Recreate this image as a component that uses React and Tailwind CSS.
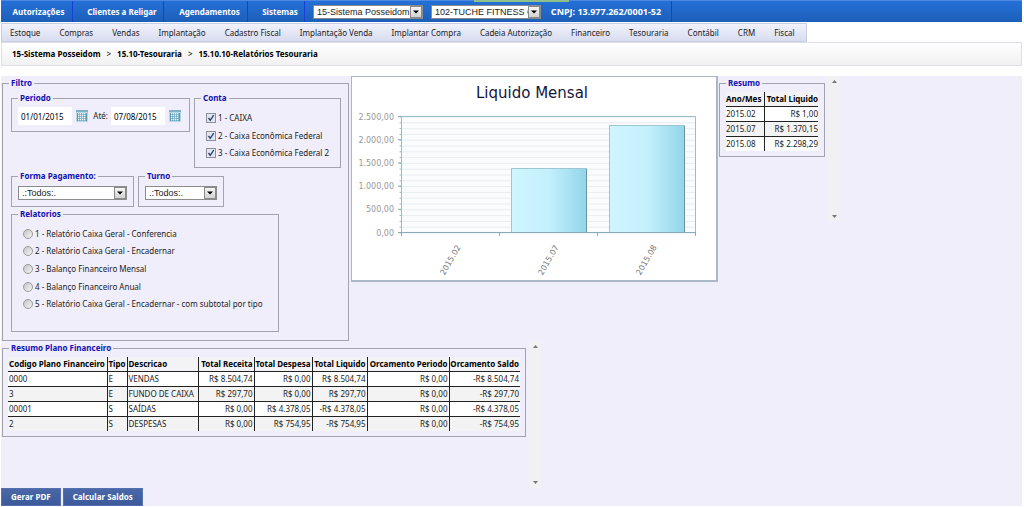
import React from 'react';

const menuItems = [
  'Estoque', 'Compras', 'Vendas', 'Implantação', 'Cadastro Fiscal', 'Implantação Venda', 'Implantar Compra',
  'Cadeia Autorização', 'Financeiro', 'Tesouraria', 'Contábil', 'CRM', 'Fiscal',
];

const contas = ['1 - CAIXA', '2 - Caixa Econômica Federal', '3 - Caixa Econômica Federal 2'];

const relatorios = [
  '1 - Relatório Caixa Geral - Conferencia',
  '2 - Relatório Caixa Geral - Encadernar',
  '3 - Balanço Financeiro Mensal',
  '4 - Balanço Financeiro Anual',
  '5 - Relatório Caixa Geral - Encadernar - com subtotal por tipo',
];

const resumo = [
  ['2015.02', 'R$ 1,00'],
  ['2015.07', 'R$ 1.370,15'],
  ['2015.08', 'R$ 2.298,29'],
];

const planoHead = [
  'Codigo Plano Financeiro', 'Tipo', 'Descricao', 'Total Receita', 'Total Despesa', 'Total Liquido',
  'Orcamento Periodo', 'Orcamento Saldo',
];

const plano = [
  ['0000', 'E', 'VENDAS', 'R$ 8.504,74', 'R$ 0,00', 'R$ 8.504,74', 'R$ 0,00', '-R$ 8.504,74'],
  ['3', 'E', 'FUNDO DE CAIXA', 'R$ 297,70', 'R$ 0,00', 'R$ 297,70', 'R$ 0,00', '-R$ 297,70'],
  ['00001', 'S', 'SAÍDAS', 'R$ 0,00', 'R$ 4.378,05', '-R$ 4.378,05', 'R$ 0,00', '-R$ 4.378,05'],
  ['2', 'S', 'DESPESAS', 'R$ 0,00', 'R$ 754,95', '-R$ 754,95', 'R$ 0,00', '-R$ 754,95'],
];

const planoWidths = ['w-[99px]', 'w-[20px]', 'w-[71px]', 'w-[56px]', 'w-[58px]', 'w-[55px]', 'w-[82px]', 'w-[71px]'];

const Panel = ({ title, className = '', bodyClassName = '', children }) => (
  <fieldset className={`min-w-0 border border-[#a3a3ad] ${className}`}>
    <legend className="ml-1.5 px-0.5 leading-3 font-bold text-[#1010b0]">{title}</legend>
    <div className={bodyClassName}>{children}</div>
  </fieldset>
);

const Select = ({ label, options, className = '' }) => (
  <div className={`relative ${className}`}>
    <select
      aria-label={label}
      className="block h-3.5 w-full appearance-none border border-[#8b8b8b] bg-white pr-3 pl-[3px] font-['Liberation_Sans',sans-serif] text-[9px] leading-3 font-normal text-[#222]"
    >
      {options.map((o) => (
        <option key={o}>{o}</option>
      ))}
    </select>
    <span className="pointer-events-none absolute inset-y-px right-px flex w-3 items-center justify-center border border-[#8a8a8a] bg-gradient-to-b from-[#f6f6f6] to-[#d2d2d2]">
      <svg width="6" height="4" viewBox="0 0 6 4">
        <path d="M0 0.5h6L3 3.5z" fill="#000" />
      </svg>
    </span>
  </div>
);

const CalendarIcon = () => (
  <svg width="12" height="12" viewBox="0 0 12 12">
    <rect width="12" height="12" fill="#b4d8e6" />
    <rect width="12" height="2" fill="#7fb2c8" />
    <rect x="1" y="3" width="10" height="8" fill="#5a9ab8" />
    {[3, 5, 7, 9].map((y) =>
      [2, 4, 6, 8].map((x) => <rect key={`${x}-${y}`} x={x} y={y} width="1.4" height="1.4" fill="#f4fbff" />)
    )}
  </svg>
);

const DateField = ({ label, value }) => (
  <>
    <input
      type="text"
      aria-label={label}
      defaultValue={value}
      className="h-[18px] w-[54px] bg-white px-[3px] text-black"
    />
    <button type="button" aria-label={`Calendário ${label}`} className="ml-1">
      <CalendarIcon />
    </button>
  </>
);

const ScrollStrip = ({ className = '' }) => (
  <div className={`ml-[3px] flex w-3 flex-col items-center justify-between bg-[#f1f0f3] py-1 ${className}`}>
    <svg width="5" height="3" viewBox="0 0 5 3"><path d="M0 3h5L2.5 0z" fill="#777" /></svg>
    <svg width="5" height="3" viewBox="0 0 5 3"><path d="M0 0h5L2.5 3z" fill="#777" /></svg>
  </div>
);

const Chart = () => {
  const ticks = ['2.500,00', '2.000,00', '1.500,00', '1.000,00', '500,00', '0,00'];
  const step = 116 / 20;
  const minor = Array.from({ length: 21 }, (_, i) => 40 + i * step);

  return (
    <svg
      width="364"
      height="203"
      viewBox="0 0 364 203"
      role="img"
      aria-label="Liquido Mensal"
      fontFamily="'DejaVu Sans', sans-serif"
    >
      <defs>
        <linearGradient id="bar">
          <stop offset="0" stopColor="#cff6ff" />
          <stop offset="0.5" stopColor="#c3f0fc" />
          <stop offset="1" stopColor="#93d5ea" />
        </linearGradient>
      </defs>
      <text x="180" y="21" textAnchor="middle" fontSize="15" fill="#15153d">Liquido Mensal</text>
      <rect x="49" y="39" width="294" height="117" fill="#fafcfd" />
      {minor.map((y) => (
        <g key={y}>
          <path d={`M49 ${y}H343`} stroke="#e1e8ec" strokeWidth="0.7" />
          <path d={`M47.5 ${y}H49`} stroke="#7fa8b6" strokeWidth="0.8" />
        </g>
      ))}
      <path d="M49.5 156V39.5H343.5V156" fill="none" stroke="#9cbccb" />
      <rect x="159.5" y="91.5" width="75" height="64" fill="url(#bar)" stroke="#9cc6d3" />
      <path d="M234.5 92V155" stroke="#6d93a2" />
      <rect x="257.5" y="48.5" width="75" height="107" fill="url(#bar)" stroke="#9cc6d3" />
      <path d="M332.5 49V155" stroke="#6d93a2" />
      <path d="M46 155.5H343.5M49.5 155V159M147.5 155V159M245.5 155V159M343.5 155V159" stroke="#86abba" />
      {ticks.map((t, i) => (
        <g key={t}>
          <path d={`M46 ${39.5 + i * 23.2}H49`} stroke="#86abba" />
          <text x="42" y={42.5 + i * 23.2} textAnchor="end" fontSize="8" fill="#999">{t}</text>
        </g>
      ))}
      {['2015.02', '2015.07', '2015.08'].map((t, i) => (
        <text
          key={t}
          transform={`translate(${109 + i * 98} 170) rotate(-60)`}
          textAnchor="end"
          fontSize="8"
          fill="#777"
        >
          {t}
        </text>
      ))}
    </svg>
  );
};

const TopItem = ({ children, className }) => (
  <a href="#" className={`flex items-center justify-center border-r border-[#1740d8] ${className}`}>{children}</a>
);

const App = () => (
  <div className="bg-white pr-0.5 font-['Noto_Sans',sans-serif] text-[8px] leading-3 text-[#222]">
    <header className="relative ml-px flex h-[22px] items-stretch border-t border-[#4b8ae0] bg-gradient-to-b from-[#2470d8] to-[#1d5fb8] font-bold text-white">
      <TopItem className="w-[72px] pl-1">Autorizações</TopItem>
      <TopItem className="w-[91px] pl-2">Clientes a Religar</TopItem>
      <TopItem className="w-[84px] pl-2">Agendamentos</TopItem>
      <TopItem className="w-[57px] pl-2">Sistemas</TopItem>
      <div className="flex items-center gap-2 pl-2">
        <Select label="Sistema" options={['15-Sistema Posseidom']} className="w-[110px]" />
        <Select label="Empresa" options={['102-TUCHE FITNESS CENTER']} className="w-[110px]" />
      </div>
      <span className="flex w-[131px] items-center justify-center border-r border-[#1740d8] text-[9px]">
        CNPJ: 13.977.262/0001-52
      </span>
      <span className="absolute -top-px left-[473px] h-0.5 w-[95px] bg-[#8fc08a]" />
    </header>

    <nav className="mt-px ml-px flex h-[19px] w-fit items-center border border-[#c9cde6] bg-gradient-to-b from-[#f1f2fb] to-[#d8dcf0]">
      {menuItems.map((m) => (
        <a key={m} href="#" className="pr-[11px] pl-2">{m}</a>
      ))}
    </nav>

    <div className="ml-px flex h-6 items-center gap-1.5 border border-[#dedee4] bg-gradient-to-b from-white to-[#f1f1f1] pl-2.5 font-bold text-black">
      <a href="#">15-Sistema Posseidom</a>
      <span className="font-normal">&gt;</span>
      <a href="#">15.10-Tesouraria</a>
      <span className="font-normal">&gt;</span>
      <a href="#">15.10.10-Relatórios Tesouraria</a>
    </div>

    <main className="mt-2.5 ml-px bg-[#f0eefa]">
      <div className="flex items-start pl-px">
        <Panel title="Filtro" className="mt-px w-[347px]" bodyClassName="pt-[3px] pr-1.5 pb-2 pl-2">
          <div className="flex items-start gap-1">
            <Panel title="Periodo" className="w-[179px]" bodyClassName="px-1.5 pt-[3px] pb-1.5">
              <div className="flex items-center">
                <DateField label="Data inicial" value="01/01/2015" />
                <span className="mr-[3px] ml-1 w-4 text-right">Até:</span>
                <DateField label="Data final" value="07/08/2015" />
              </div>
            </Panel>
            <Panel title="Conta" className="w-[147px]" bodyClassName="pt-[5px] pr-1 pb-[5px] pl-[11px]">
              <div className="flex h-[53px] flex-col">
                {contas.map((c) => (
                  <label key={c} className="flex flex-1 items-center gap-0.5 whitespace-nowrap">
                    <span className="relative block size-2.5">
                      <input
                        type="checkbox"
                        defaultChecked
                        className="peer block size-2.5 appearance-none border border-[#8c9199] bg-[#e2e6ee]"
                      />
                      <svg
                        viewBox="0 0 10 10"
                        className="pointer-events-none absolute inset-0 hidden size-2.5 peer-checked:block"
                      >
                        <path d="M2.5 5l1.8 2.3L7.7 2.2" fill="none" stroke="#33447a" strokeWidth="1.4" />
                      </svg>
                    </span>
                    {c}
                  </label>
                ))}
              </div>
            </Panel>
          </div>

          <div className="mt-0.5 flex gap-1">
            <Panel title="Forma Pagamento:" className="w-[123px]" bodyClassName="px-1.5 pt-1 pb-1.5">
              <Select label="Forma Pagamento" options={['.:Todos:.']} />
            </Panel>
            <Panel title="Turno" className="w-[86px]" bodyClassName="px-1.5 pt-1 pb-1.5">
              <Select label="Turno" options={['.:Todos:.']} />
            </Panel>
          </div>

          <Panel title="Relatorios" className="mt-px w-[268px]" bodyClassName="pt-[5px] pb-[18px] pl-[11px]">
            <div className="flex h-[88px] flex-col">
              {relatorios.map((r) => (
                <label key={r} className="flex flex-1 items-center gap-0.5 whitespace-nowrap">
                  <input
                    type="radio"
                    name="relatorio"
                    className="size-2.5 shrink-0 appearance-none rounded-full border border-[#999] bg-gradient-to-br from-[#c4c4c8] to-[#f6f6f6] checked:from-[#33447a]"
                  />
                  {r}
                </label>
              ))}
            </div>
          </Panel>
        </Panel>

        <div className="ml-0.5 border border-r-2 border-b-2 border-[#a9b8c6] bg-white">
          <Chart />
        </div>

        <Panel title="Resumo" className="mt-px ml-px w-[106px]" bodyClassName="px-1.5 pt-[3px] pb-[5px]">
          <table className="w-full table-fixed border-collapse leading-[14px] whitespace-nowrap">
            <thead>
              <tr className="border-b border-[#222] bg-[#f3f3f5] text-black">
                <th className="w-[38px] border-r border-[#222] text-left">Ano/Mes</th>
                <th className="text-right">Total Liquido</th>
              </tr>
            </thead>
            <tbody>
              {resumo.map(([mes, total]) => (
                <tr key={mes} className="border-b border-[#222] bg-white last:border-b-0 even:bg-[#f3f3f3]">
                  <td className="border-r border-[#222]">{mes}</td>
                  <td className="text-right">{total}</td>
                </tr>
              ))}
            </tbody>
          </table>
        </Panel>
        <ScrollStrip className="h-[146px]" />
      </div>

      <div className="flex items-start pl-px">
        <Panel title="Resumo Plano Financeiro" className="mt-px w-[524px]" bodyClassName="px-[5px] pt-[3px] pb-[5px]">
          <table className="w-full table-fixed border-collapse leading-[14px] whitespace-nowrap">
            <thead>
              <tr className="border-b border-[#222] bg-[#f3f3f5] text-black">
                {planoHead.map((h, i) => (
                  <th
                    key={h}
                    className={`border-r border-[#222] last:border-r-0 ${planoWidths[i]} ${i < 3 ? 'pl-px text-left' : 'pr-px text-right'}`}
                  >
                    {h}
                  </th>
                ))}
              </tr>
            </thead>
            <tbody>
              {plano.map((row) => (
                <tr key={row[0]} className="border-b border-[#222] bg-white last:border-b-0 even:bg-[#f3f3f3]">
                  {row.map((cell, i) => (
                    <td
                      key={planoHead[i]}
                      className={`border-r border-[#222] last:border-r-0 ${i < 3 ? 'pl-px text-left' : 'pr-px text-right'}`}
                    >
                      {cell}
                    </td>
                  ))}
                </tr>
              ))}
            </tbody>
          </table>
        </Panel>
        <ScrollStrip className="h-[147px]" />
      </div>

      <div className="flex gap-0.5 font-bold text-white">
        <button type="button" className="h-[18px] border border-[#5470ad] bg-gradient-to-b from-[#4a68a8] to-[#3c5a9b] px-[9px]">
          Gerar PDF
        </button>
        <button type="button" className="h-[18px] border border-[#5470ad] bg-gradient-to-b from-[#4a68a8] to-[#3c5a9b] px-[9px]">
          Calcular Saldos
        </button>
      </div>
    </main>
  </div>
);

export default App;
